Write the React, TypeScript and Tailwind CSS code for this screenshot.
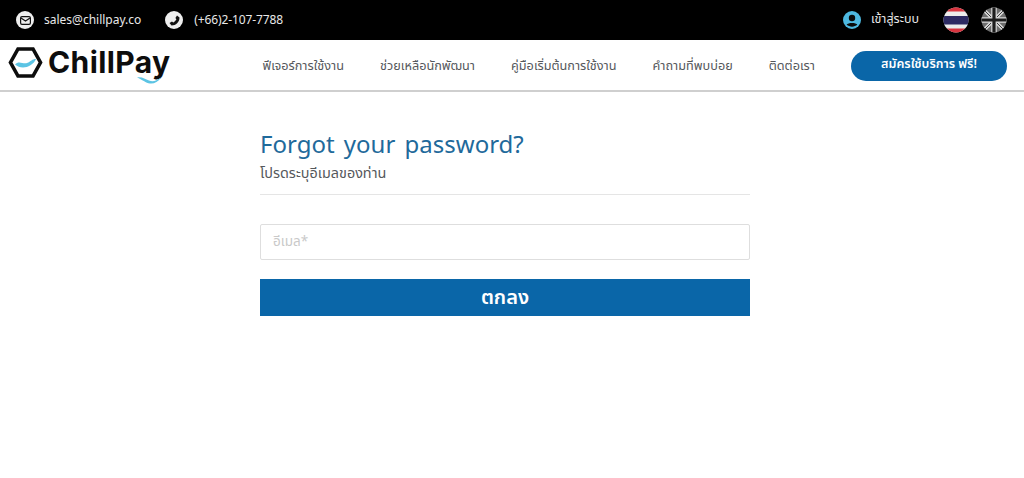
const thai = "font-['Noto_Sans_Thai','Noto_Sans','Open_Sans','DejaVu_Sans',sans-serif]";

const navItems = ['ฟีเจอร์การใช้งาน', 'ช่วยเหลือนักพัฒนา', 'คู่มือเริ่มต้นการใช้งาน', 'คำถามที่พบบ่อย', 'ติดต่อเรา'];

function ThaiFlag() {
  return (
    <svg width="26" height="26" viewBox="0 0 26 26">
      <defs>
        <clipPath id="flag-th">
          <circle cx="13" cy="13" r="12.5" />
        </clipPath>
      </defs>
      <g clipPath="url(#flag-th)">
        <rect width="26" height="26" fill="#ececec" />
        <rect width="26" height="4.5" fill="#d8343f" />
        <rect y="21.5" width="26" height="4.5" fill="#d8343f" />
        <rect y="9" width="26" height="8.5" fill="#2d2a63" />
      </g>
    </svg>
  );
}

function UkFlag() {
  return (
    <svg width="26" height="26" viewBox="0 0 26 26">
      <defs>
        <clipPath id="flag-uk">
          <circle cx="13" cy="13" r="12.5" />
        </clipPath>
      </defs>
      <g clipPath="url(#flag-uk)">
        <rect width="26" height="26" fill="#6e6e6e" />
        <path d="M0 0 26 26M26 0 0 26" stroke="#d8d8d8" strokeWidth="3.4" />
        <path d="M0 0 26 26M26 0 0 26" stroke="#3a3a3a" strokeWidth="1" />
        <path d="M13 0V26M0 13H26" stroke="#d8d8d8" strokeWidth="5.5" />
        <path d="M13 0V26M0 13H26" stroke="#1c1c1c" strokeWidth="3.2" />
      </g>
    </svg>
  );
}

function Logo() {
  return (
    <div className="relative mb-[6px] flex items-center gap-[5px]">
      <svg width="35" height="31" viewBox="0 0 35 31">
        <path d="M10 2H25L32.5 15.5 25 29H10L2.5 15.5Z" fill="#fff" stroke="#0d0d0d" strokeWidth="3.6" />
        <path d="M7 17.5C11 13 15 17.5 19 16S24 12 28 12C25.5 17.5 20 20.5 15 20.5 12 20.5 9.5 19.5 7 17.5Z" fill="#5cc4e4" />
      </svg>
      <span className="font-['Inter',sans-serif] text-[30px] leading-none font-bold tracking-[0.4px] text-[#0d0d0d]">ChillPay</span>
      <svg className="absolute top-[29px] left-[129px]" width="25" height="8" viewBox="0 0 25 8">
        <path d="M0 1.5C5 0.5 8 3 12 4.5S19 5 24 1.5C21 6 17 8 13 7.5S5 3.5 0 1.5Z" fill="#5cc4e4" />
      </svg>
    </div>
  );
}

export default function App() {
  return (
    <div className={`min-h-[478px] w-[1024px] overflow-hidden bg-white ${thai}`}>
      <div className="flex h-10 items-center justify-between bg-black pr-[17px] pl-[16px] text-[12px] text-[#e8e8e8]">
        <div className="flex items-center">
          <span className="flex h-[18px] w-[18px] items-center justify-center rounded-full bg-[#eeeeee]">
            <svg width="11" height="9" viewBox="0 0 11 9">
              <rect x="0.6" y="0.6" width="9.8" height="7.8" rx="1.4" fill="none" stroke="#111" strokeWidth="1.2" />
              <path d="M1 2 5.5 5 10 2" fill="none" stroke="#111" strokeWidth="1.2" />
            </svg>
          </span>
          <span className="ml-[10px]">sales@chillpay.co</span>
          <span className="ml-[24px] flex h-[18px] w-[18px] items-center justify-center rounded-full bg-[#eeeeee]">
            <svg width="11" height="11" viewBox="0 0 11 11">
              <path d="M8 0.5 10.5 2.5C10.5 7 7 10.5 2.5 10.5L0.5 8 3 6.4 4.2 7.4C5.5 6.8 6.8 5.5 7.4 4.2L6.4 3Z" fill="#111" />
            </svg>
          </span>
          <span className="ml-[11px] tracking-[-0.12px]">(+66)2-107-7788</span>
        </div>
        <div className="flex items-center">
          <svg width="18" height="18" viewBox="0 0 18 18">
            <circle cx="9" cy="9" r="9" fill="#4db8e0" />
            <circle cx="9" cy="7" r="3.2" fill="#0a0a0a" />
            <path d="M3.6 13.6C5 11.4 13 11.4 14.4 13.6 11.5 16.4 6.5 16.4 3.6 13.6Z" fill="#0a0a0a" />
          </svg>
          <span className="mr-[24px] ml-[10px] text-[12.5px]">เข้าสู่ระบบ</span>
          <ThaiFlag />
          <span className="ml-[12px]">
            <UkFlag />
          </span>
        </div>
      </div>

      <nav className="flex h-[52px] items-center border-b-2 border-[#cfcfcf] pr-[17px] pl-2">
        <Logo />
        <div className="ml-[92px] flex items-center gap-[36px] pt-[3px] text-[12.7px] text-[#55585c]">
          {navItems.map((item) => (
            <a key={item} className="whitespace-nowrap">
              {item}
            </a>
          ))}
        </div>
        <button className="mt-[1px] ml-auto h-[30px] w-[156px] rounded-full bg-[#0a66a8] text-[12.5px] font-semibold text-white">
          สมัครใช้บริการ ฟรี!
        </button>
      </nav>

      <main className="flex w-[1010px] justify-center">
        <div className="mt-[38px] w-[490px]">
          <h1 className="text-[24px] leading-[32px] text-[#1f6a9b] [word-spacing:3px]">Forgot your password?</h1>
          <p className="mt-[2px] border-b border-[#e5e5e5] pb-[10px] text-[14.4px] leading-[20px] text-[#55585c]">โปรดระบุอีเมลของท่าน</p>
          <input
            placeholder="อีเมล*"
            className="mt-[29px] h-9 w-full rounded-[2px] border border-[#dedede] px-3 text-[13.5px] outline-none placeholder:text-[#c9c9c9]"
          />
          <button className="mt-[19px] h-[37px] w-full bg-[#0a66a8] text-[20px] font-semibold text-white">ตกลง</button>
        </div>
      </main>
    </div>
  );
}
